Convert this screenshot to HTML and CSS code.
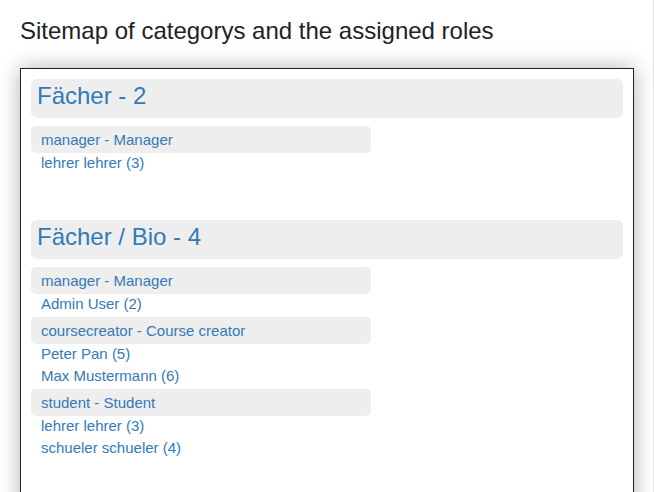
FILE: index.html
```html
<!DOCTYPE html>
<html lang="en">
<head>
<meta charset="utf-8">
<title>Sitemap of categorys</title>
<link rel="stylesheet" href="styles.css">
</head>
<body>
<div class="page">
  <h2 class="title">Sitemap of categorys and the assigned roles</h2>
  <div class="sitemap">
    <section class="cat">
      <h3 class="cat-name"><a href="#">Fächer - 2</a></h3>
      <div class="role">
        <div class="role-name"><a href="#">manager - Manager</a></div>
        <div class="user"><a href="#">lehrer lehrer (3)</a></div>
      </div>
    </section>
    <section class="cat">
      <h3 class="cat-name"><a href="#">Fächer / Bio - 4</a></h3>
      <div class="role">
        <div class="role-name"><a href="#">manager - Manager</a></div>
        <div class="user"><a href="#">Admin User (2)</a></div>
      </div>
      <div class="role">
        <div class="role-name"><a href="#">coursecreator - Course creator</a></div>
        <div class="user"><a href="#">Peter Pan (5)</a></div>
        <div class="user"><a href="#">Max Mustermann (6)</a></div>
      </div>
      <div class="role">
        <div class="role-name"><a href="#">student - Student</a></div>
        <div class="user"><a href="#">lehrer lehrer (3)</a></div>
        <div class="user"><a href="#">schueler schueler (4)</a></div>
      </div>
    </section>
  </div>
</div>
</body>
</html>
```
FILE: styles.css
```css
html, body {
  margin: 0;
  padding: 0;
  background: #fff;
}

body {
  font-family: "Liberation Sans", Arial, sans-serif;
  color: #222;
}

a {
  color: #337ab7;
  text-decoration: none;
}

.page {
  box-sizing: border-box;
  min-height: 100vh;
  padding: 17px 19px 0 20px;
  border-right: 1px solid #e4e4e4;
  overflow: hidden;
}

.title {
  margin: 0 0 23px;
  font-size: 24px;
  line-height: 28px;
  font-weight: normal;
  color: #222;
}

.sitemap {
  background: #fff;
  border: 1px solid #222;
  padding: 10px 10px 80px;
  box-shadow: 0 0 20px rgba(0, 0, 0, 0.3);
}

.cat + .cat {
  margin-top: 45px;
}

.cat-name {
  margin: 0 0 8px;
  padding: 4px 6px 9px;
  background: #eee;
  border-radius: 6px;
  font-size: 24px;
  line-height: 26px;
  font-weight: normal;
}

.role + .role {
  margin-top: 2px;
}

.role-name {
  width: 340px;
  box-sizing: border-box;
  padding: 3px 10px 2px;
  background: #eee;
  border-radius: 5px;
  font-size: 15px;
  line-height: 22px;
}

.user {
  padding: 0 10px 1px;
  font-size: 15px;
  line-height: 20.5px;
}
```
